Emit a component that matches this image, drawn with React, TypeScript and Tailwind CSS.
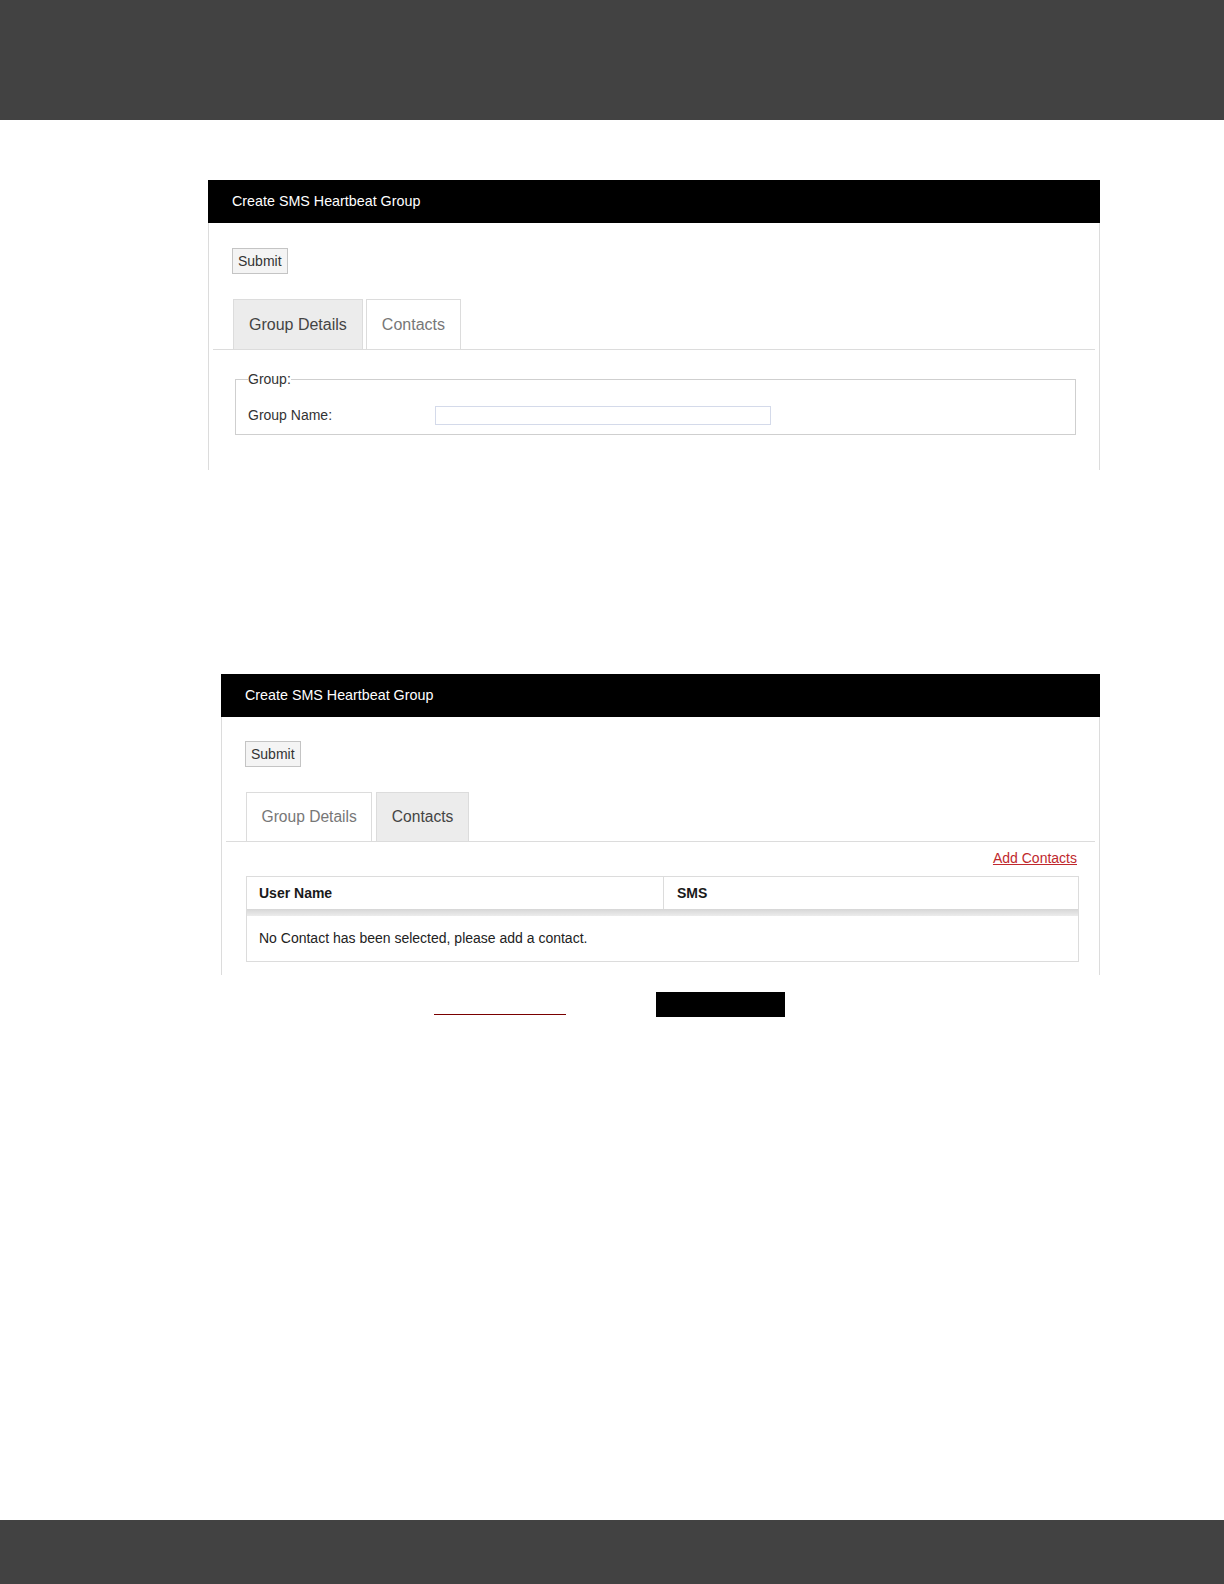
import React from 'react';

type TabKey = 'details' | 'contacts';

const TABS: { key: TabKey; label: string }[] = [
  { key: 'details', label: 'Group Details' },
  { key: 'contacts', label: 'Contacts' },
];

function Panel({
  active,
  bodyHeight,
  compact = false,
  children,
}: {
  active: TabKey;
  bodyHeight: string;
  compact?: boolean;
  children: React.ReactNode;
}) {
  return (
    <div>
      {/* Title bar */}
      <div className="flex h-[43px] items-center bg-black px-[24px] text-[14.3px] text-white">
        Create SMS Heartbeat Group
      </div>

      <div
        className={`border-x border-[#dcdcdc] bg-white ${bodyHeight} ${
          compact ? 'pt-[24px]' : 'pt-[25px]'
        }`}
      >
        <button className="ml-[23px] h-[26px] border border-[#c4c4c4] bg-[#f4f4f4] px-[5px] text-[14px] leading-none text-[#333]">
          Submit
        </button>

        {/* Tabs */}
        <div
          className={`mx-[4px] mt-[25px] flex border-b border-[#dcdcdc] pl-[20px] ${
            compact ? 'gap-[4px]' : 'gap-[3px]'
          }`}
        >
          {TABS.map((tab) => (
            <div
              key={tab.key}
              className={`flex items-center border border-b-0 border-[#dcdcdc] ${
                compact ? 'h-[49px] px-[14.5px] text-[15.6px]' : 'h-[50px] px-[15px] text-[16px]'
              } ${active === tab.key ? 'bg-[#ececec] text-[#444]' : 'bg-white text-[#777]'}`}
            >
              {tab.label}
            </div>
          ))}
        </div>

        {children}
      </div>
    </div>
  );
}

export default function App() {
  return (
    <div className="flex min-h-[1584px] flex-col bg-white font-['Liberation_Sans',Arial,sans-serif]">
      <div className="h-[120px] shrink-0 bg-[#424242]" />

      {/* Group details screen */}
      <div className="ml-[208px] mt-[60px] w-[892px]">
        <Panel active="details" bodyHeight="h-[247px]">
          <fieldset className="ml-[26px] mr-[23px] mt-[19px] border border-[#cfcfcf] px-[12px] pb-[8px]">
            <legend className="text-[14px] text-[#333]">Group:</legend>
            <div className="mt-[15px] flex items-center">
              <label className="w-[187px] text-[14px] text-[#333]">Group Name:</label>
              <input
                type="text"
                className="h-[19px] w-[336px] border border-[#d4daea] bg-white outline-none"
              />
            </div>
          </fieldset>
        </Panel>
      </div>

      {/* Contacts screen */}
      <div className="ml-[221px] mt-[204px] w-[879px]">
        <Panel active="contacts" bodyHeight="h-[258px]" compact>
          <div className="mr-[22px] mt-[6px] flex justify-end">
            <a href="#" className="text-[14px] text-[#c0282d] underline">
              Add Contacts
            </a>
          </div>
          <div className="ml-[24px] mr-[20px] mt-[7px] border border-[#dcdcdc]">
            <div className="grid grid-cols-[416px_1fr] text-[14px] font-bold text-[#1a1a1a]">
              <div className="flex h-[32px] items-center px-[12px]">User Name</div>
              <div className="flex h-[32px] items-center border-l border-[#dcdcdc] px-[13px]">SMS</div>
            </div>
            <div className="h-[7px] bg-gradient-to-b from-[#d6d6d6] to-[#ececec]" />
            <div className="flex h-[45px] items-center px-[12px] text-[14px] text-[#222]">
              No Contact has been selected, please add a contact.
            </div>
          </div>
        </Panel>
      </div>

      <div className="ml-[434px] mt-[17px] flex items-end">
        <div className="mb-[2px] h-px w-[132px] bg-[#7a0000]" />
        <div className="ml-[90px] h-[25px] w-[129px] bg-black" />
      </div>

      <div className="mt-auto h-[64px] shrink-0 bg-[#424242]" />
    </div>
  );
}
